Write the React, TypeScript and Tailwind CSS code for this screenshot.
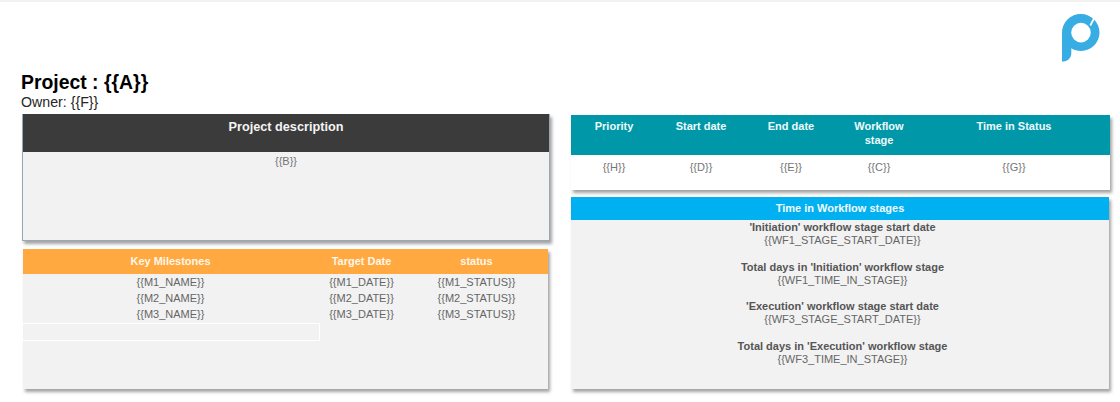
const font = "font-['Liberation_Sans',Arial,sans-serif]"

const Logo = () => (
    <svg width="38" height="48" viewBox="0 0 38 48" className="block">
        <path
            fill="#38ade4"
            fillRule="evenodd"
            d="M19 0a18.500 18.500 0 1 1 0 37c-3.600 0-7-1-9.700-2.800V39c0 5-3.600 8.600-9.300 8.600V18.500A18.700 18.700 0 0 1 19 0Zm0 8.800a9.800 9.800 0 1 0 0 19.600 9.800 9.800 0 0 0 0-19.600Z"
        />
        <path d="M27.500 11 31.500 3.500 33 4.500 29 12Z" fill="#ffffff" />
    </svg>
)

const milestones = [
    ["{{M1_NAME}}", "{{M1_DATE}}", "{{M1_STATUS}}"],
    ["{{M2_NAME}}", "{{M2_DATE}}", "{{M2_STATUS}}"],
    ["{{M3_NAME}}", "{{M3_DATE}}", "{{M3_STATUS}}"],
]

const summaryCols = [
    { title: "Priority", value: "{{H}}" },
    { title: "Start date", value: "{{D}}" },
    { title: "End date", value: "{{E}}" },
    { title: "Workflow stage", value: "{{C}}" },
    { title: "Time in Status", value: "{{G}}" },
]

const stages = [
    { label: "'Initiation' workflow stage start date", value: "{{WF1_STAGE_START_DATE}}" },
    { label: "Total days in 'Initiation' workflow stage", value: "{{WF1_TIME_IN_STAGE}}" },
    { label: "'Execution' workflow stage start date", value: "{{WF3_STAGE_START_DATE}}" },
    { label: "Total days in 'Execution' workflow stage", value: "{{WF3_TIME_IN_STAGE}}" },
]

const panelShadow = "shadow-[2px_3px_3px_rgba(90,90,90,0.55)]"

export default function App() {
    return (
        <div className={`${font} w-[1120px] h-[402px] overflow-hidden bg-white border-t-2 border-[#f1f1f1] flex flex-col`}>
            <div className="flex justify-end pt-3 pr-5 h-[68px] shrink-0">
                <Logo />
            </div>

            <div className="pl-[21px] h-[44px] shrink-0">
                <h1 className="text-[19.400px] font-bold leading-[24px] text-black">Project : {"{{A}}"}</h1>
                <p className="text-[14.200px] leading-[16px] text-[#262626]">Owner: {"{{F}}"}</p>
            </div>

            <div className="flex">
                {/* left column */}
                <div className="w-[549px] shrink-0 pl-[22px] flex flex-col">
                    <section className={`w-[528px] h-[127px] bg-[#f2f2f2] border-x border-b border-[#9aa8b2] ${panelShadow}`}>
                        <div className="h-[38px] bg-[#3b3b3b] text-center text-[#f4f4f4] font-bold text-[12.700px] leading-[26px]">
                            Project description
                        </div>
                        <p className="text-center text-[11px] leading-[18px] text-[#757575]">{"{{B}}"}</p>
                    </section>

                    <section className={`mt-2 ml-px w-[525px] h-[140px] bg-[#f2f2f2] ${panelShadow}`}>
                        <div className="grid grid-cols-[295px_87px_143px] h-[25px] bg-[#ffa940] text-center text-[#fff6ea] font-bold text-[11px] leading-[24px]">
                            <div>Key Milestones</div>
                            <div>Target Date</div>
                            <div>status</div>
                        </div>
                        {milestones.map((row) => (
                            <div key={row[0]} className="grid grid-cols-[295px_87px_143px] h-4 text-center text-[11px] leading-4 text-[#666666]">
                                {row.map((cell) => (
                                    <div key={cell}>{cell}</div>
                                ))}
                            </div>
                        ))}
                        <div className="w-[298px] h-[18px] mt-px -ml-px border border-white"></div>
                    </section>
                </div>

                {/* right column */}
                <div className="ml-[22px] w-[539px] flex flex-col">
                    <section className={`mt-px h-[75px] bg-white ${panelShadow}`}>
                        <div className="grid grid-cols-[86px_88px_92px_84px_186px] h-[40px] bg-[#0098a8] text-center text-[#eefafb] font-bold text-[11px] leading-[13.500px] pt-[5px]">
                            {summaryCols.map((col) => (
                                <div key={col.title} className="px-4">{col.title}</div>
                            ))}
                        </div>
                        <div className="grid grid-cols-[86px_88px_92px_84px_186px] text-center text-[11px] leading-[24px] text-[#757575]">
                            {summaryCols.map((col) => (
                                <div key={col.title}>{col.value}</div>
                            ))}
                        </div>
                    </section>

                    <section className={`mt-[7px] w-[538px] h-[192px] bg-[#f2f2f2] ${panelShadow}`}>
                        <div className="h-[23px] bg-[#00b0f0] text-center text-[#f0fbff] font-bold text-[11px] leading-[23px]">
                            Time in Workflow stages
                        </div>
                        <div className="flex flex-col gap-[13.500px] pt-px pl-[5px] text-center text-[11px] leading-[13px]">
                            {stages.map((stage) => (
                                <div key={stage.label}>
                                    <p className="font-bold text-[#555555]">{stage.label}</p>
                                    <p className="text-[#666666]">{stage.value}</p>
                                </div>
                            ))}
                        </div>
                    </section>
                </div>
            </div>
        </div>
    )
}
